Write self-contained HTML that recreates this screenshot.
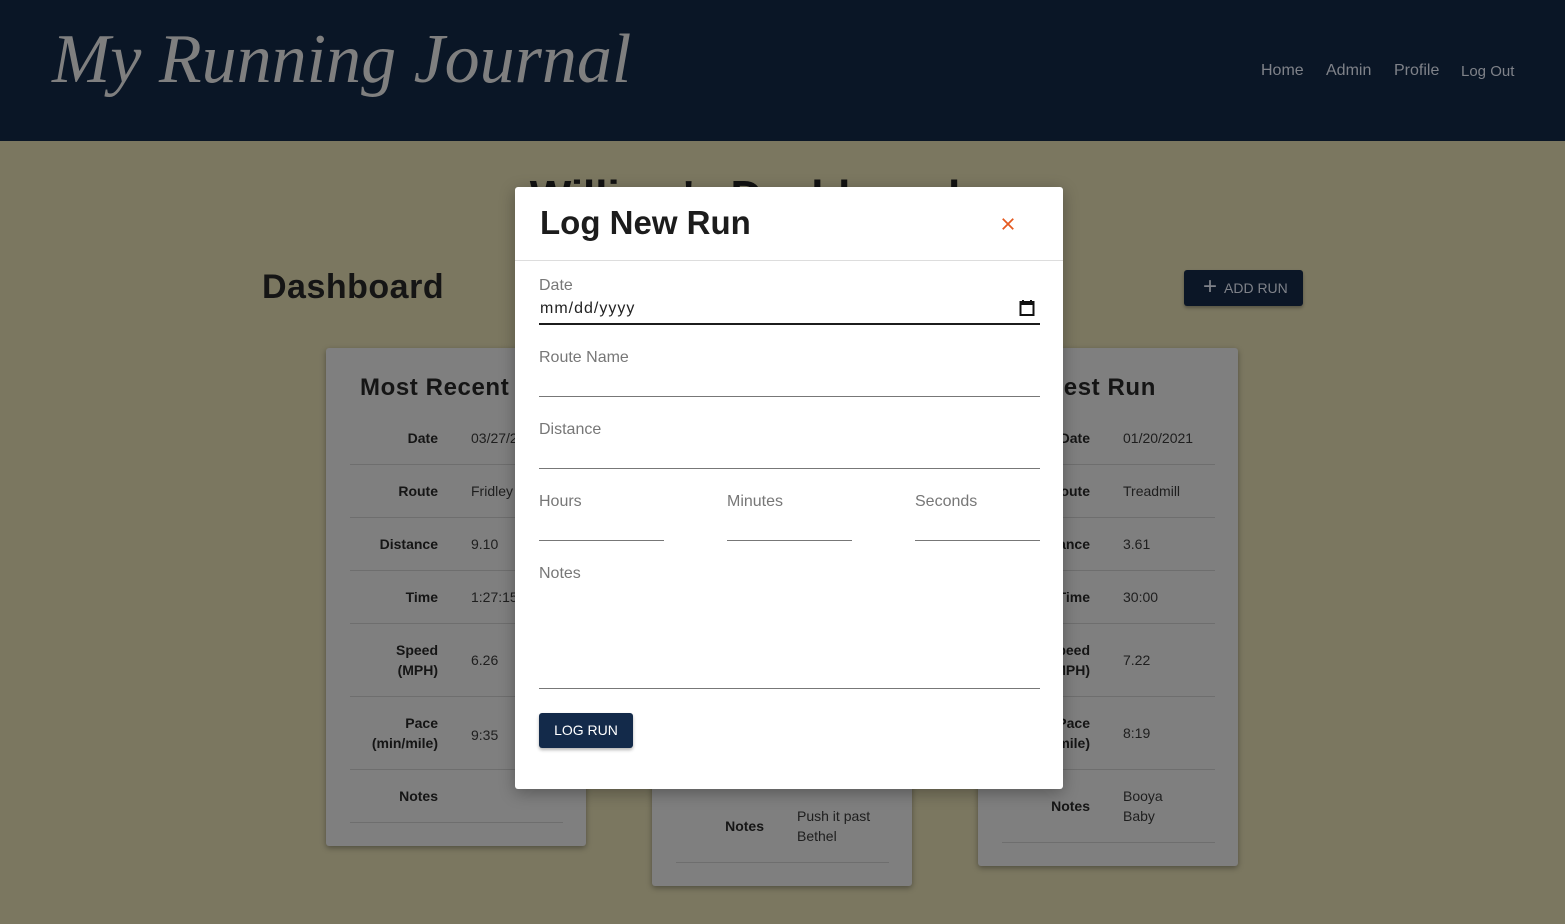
<!DOCTYPE html>
<html><head><style>
*{box-sizing:border-box;margin:0;padding:0}
body{width:1565px;height:924px;overflow:hidden;background:#7b7760;font-family:"Liberation Sans",sans-serif;position:relative}
.hdr{position:absolute;left:0;top:0;width:1565px;height:141px;background:#0a1626}
.logo{position:absolute;left:52px;top:20px;font:italic 70px "Liberation Serif",serif;color:#7f7f7f;letter-spacing:0px;white-space:nowrap}
.nav{position:absolute;top:62px;font-size:16px;color:#7f8289}
.dash{position:absolute;left:262px;top:268px;font-size:34px;font-weight:bold;color:#151515;letter-spacing:.5px}
.welcome{position:absolute;left:0;width:1490px;text-align:center;top:172px;font-size:44px;font-weight:bold;color:#111}
.add{position:absolute;left:1184px;top:270px;width:119px;height:36px;background:#0b1626;border-radius:3px;color:#7f8289;font-size:14px;line-height:36px;padding-left:40px;box-shadow:0 2px 3px rgba(0,0,0,.3)}
.add:before{content:"+";position:absolute;left:19px;top:-1px;font-size:24px}
.card{position:absolute;width:260px;background:#7f7f7f;border-radius:3px;box-shadow:0 2px 6px rgba(0,0,0,.35)}
.card h2{position:absolute;left:34px;top:26px;font-size:24px;color:#151515;white-space:nowrap;letter-spacing:.6px}
.row{position:absolute;left:24px;width:213px;border-bottom:1px solid #6e6e6e}
.lab{position:absolute;right:125px;font-size:14px;font-weight:bold;color:#151515;text-align:right;line-height:20px}
.val{position:absolute;left:121px;font-size:14px;color:#1e1e1e;line-height:20px}
.modal{position:absolute;left:515px;top:187px;width:548px;height:602px;background:#fff;border-radius:3px;box-shadow:0 4px 16px rgba(0,0,0,.3)}
.modal h1{position:absolute;left:25px;top:17px;font-size:33px;color:#1c1c1c}
.x{position:absolute;left:486px;top:30px;width:14px;height:14px}
.hl{position:absolute;left:0;top:73px;width:548px;border-top:1px solid #ddd}
.fl{position:absolute;font-size:16px;color:#777}
.ln{position:absolute;border-top:1px solid #777}
.btn{position:absolute;left:24px;top:526px;width:94px;height:35px;background:#132a4a;color:#fff;border-radius:3px;font-size:14px;line-height:35px;text-align:center;box-shadow:0 2px 3px rgba(0,0,0,.3)}
</style></head><body>
<div class="hdr">
<div class="logo">My Running Journal</div>
<div class="nav" style="left:1261px">Home</div>
<div class="nav" style="left:1326px">Admin</div>
<div class="nav" style="left:1394px">Profile</div>
<div class="nav" style="left:1461px;font-size:15px;top:63px">Log Out</div>
</div>
<div class="welcome">William's Dashboard</div>
<div class="dash">Dashboard</div>
<div class="add">ADD RUN</div>

<div class="card" style="left:326px;top:348px;height:498px">
<h2>Most Recent Run</h2>
<div class="row" style="top:80px;height:37px"><span class="lab" style="top:0">Date</span><span class="val" style="top:0">03/27/2021</span></div>
<div class="row" style="top:117px;height:53px"><span class="lab" style="top:16px">Route</span><span class="val" style="top:16px">Fridley</span></div>
<div class="row" style="top:170px;height:53px"><span class="lab" style="top:16px">Distance</span><span class="val" style="top:16px">9.10</span></div>
<div class="row" style="top:223px;height:53px"><span class="lab" style="top:16px">Time</span><span class="val" style="top:16px">1:27:15</span></div>
<div class="row" style="top:276px;height:73px"><span class="lab" style="top:16px">Speed<br>(MPH)</span><span class="val" style="top:26px">6.26</span></div>
<div class="row" style="top:349px;height:73px"><span class="lab" style="top:16px">Pace<br>(min/mile)</span><span class="val" style="top:28px">9:35</span></div>
<div class="row" style="top:422px;height:53px"><span class="lab" style="top:16px">Notes</span></div>
</div>

<div class="card" style="left:652px;top:348px;height:538px">
<div class="row" style="top:440px;height:75px"><span class="lab" style="top:28px">Notes</span><span class="val" style="top:18px">Push it past<br>Bethel</span></div>
</div>

<div class="card" style="left:978px;top:348px;height:518px">
<h2>Fastest Run</h2>
<div class="row" style="top:80px;height:37px"><span class="lab" style="top:0">Date</span><span class="val" style="top:0">01/20/2021</span></div>
<div class="row" style="top:117px;height:53px"><span class="lab" style="top:16px">Route</span><span class="val" style="top:16px">Treadmill</span></div>
<div class="row" style="top:170px;height:53px"><span class="lab" style="top:16px">Distance</span><span class="val" style="top:16px">3.61</span></div>
<div class="row" style="top:223px;height:53px"><span class="lab" style="top:16px">Time</span><span class="val" style="top:16px">30:00</span></div>
<div class="row" style="top:276px;height:73px"><span class="lab" style="top:16px">Speed<br>(MPH)</span><span class="val" style="top:26px">7.22</span></div>
<div class="row" style="top:349px;height:73px"><span class="lab" style="top:16px">Pace<br>(min/mile)</span><span class="val" style="top:26px">8:19</span></div>
<div class="row" style="top:422px;height:73px"><span class="lab" style="top:26px">Notes</span><span class="val" style="top:16px">Booya<br>Baby</span></div>
</div>

<div class="modal">
<h1>Log New Run</h1>
<svg class="x" viewBox="0 0 16 16"><path d="M2 2L14 14M14 2L2 14" stroke="#e5591f" stroke-width="2"/></svg>
<div class="hl"></div>
<div class="fl" style="left:24px;top:90px">Date</div>
<div class="fl" style="left:25px;top:113px;color:#222;letter-spacing:1px">mm/dd/yyyy</div>
<svg style="position:absolute;left:504px;top:112px" width="16" height="18" viewBox="0 0 16 18"><rect x="1.5" y="3" width="13" height="13" fill="none" stroke="#111" stroke-width="2"/><rect x="1.5" y="3" width="13" height="3" fill="#111"/><path d="M4 1v3M12 1v3" stroke="#111" stroke-width="2"/></svg>
<div class="ln" style="left:24px;top:136px;width:501px;border-top:2px solid #1c1c1c"></div>
<div class="fl" style="left:24px;top:162px">Route Name</div>
<div class="ln" style="left:24px;top:209px;width:501px"></div>
<div class="fl" style="left:24px;top:234px">Distance</div>
<div class="ln" style="left:24px;top:281px;width:501px"></div>
<div class="fl" style="left:24px;top:306px">Hours</div>
<div class="fl" style="left:212px;top:306px">Minutes</div>
<div class="fl" style="left:400px;top:306px">Seconds</div>
<div class="ln" style="left:24px;top:353px;width:125px"></div>
<div class="ln" style="left:212px;top:353px;width:125px"></div>
<div class="ln" style="left:400px;top:353px;width:125px"></div>
<div class="fl" style="left:24px;top:378px">Notes</div>
<div class="ln" style="left:24px;top:501px;width:501px"></div>
<div class="btn">LOG RUN</div>
</div>
</body></html>
